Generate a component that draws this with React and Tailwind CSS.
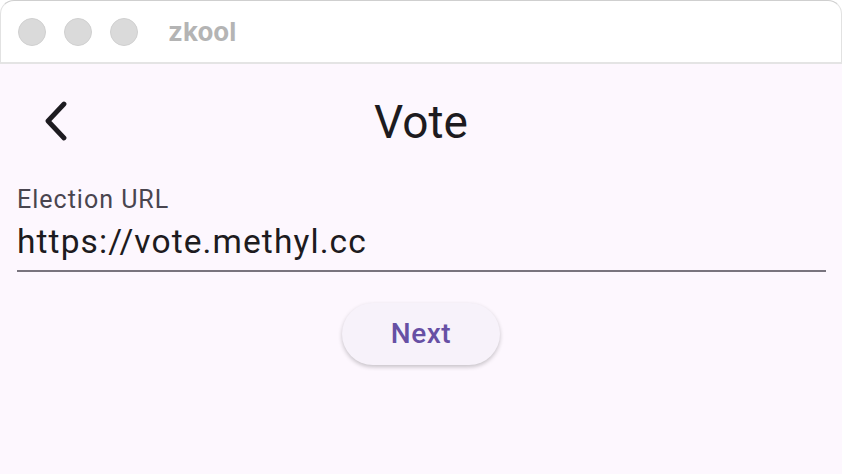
import React, { useState } from "react";

const BackIcon = () => (
    <svg width="26" height="40" viewBox="0 0 26 40" fill="none">
        <path d="M21 3 L5 20 L21 37" stroke="#1d1b20" strokeWidth="4.8" strokeLinecap="round" strokeLinejoin="round" />
    </svg>
);

const App = () => {
    const [url, setUrl] = useState("https://vote.methyl.cc");

    return (
        <div className="w-[842px] h-[474px] bg-white overflow-hidden flex flex-col">
            {/* title bar */}
            <div className="h-[64px] shrink-0 bg-white flex items-center pl-[17px] rounded-t-[14px] border-t border-x border-b-2 border-t-[#cfcfcf] border-x-[#e2e2e2] border-b-[#e4e4e4]">
                <div className="flex gap-[18px]">
                    <div className="w-[28px] h-[28px] rounded-full bg-[#dadada] border border-[#d0d0d0]" />
                    <div className="w-[28px] h-[28px] rounded-full bg-[#dadada] border border-[#d0d0d0]" />
                    <div className="w-[28px] h-[28px] rounded-full bg-[#dadada] border border-[#d0d0d0]" />
                </div>
                <span
                    className="ml-[30px] text-[26px] leading-none font-bold text-[#b4b4b4]"
                    style={{ fontFamily: 'Inter, "Liberation Sans", sans-serif' }}
                >
                    zkool
                </span>
            </div>

            {/* content */}
            <div className="flex-1 bg-[#fdf7fe]" style={{ fontFamily: 'Roboto, "Noto Sans", sans-serif' }}>
                <div className="h-[112px] flex items-center relative">
                    <button className="w-[96px] h-[96px] ml-[8px] mt-[2px] flex items-center justify-center">
                        <BackIcon />
                    </button>
                    <div className="absolute inset-0 pt-[5px] flex items-center justify-center pointer-events-none">
                        <span className="text-[46px] text-[#1d1b20]">Vote</span>
                    </div>
                </div>

                <div className="pl-[17px] pr-[16px] pt-[10px]">
                    <div className="border-b-2 border-[#79747e] pb-[8px]">
                        <div className="text-[25px] leading-[28px] tracking-[1px] text-[#49454f]">Election URL</div>
                        <input
                            className="mt-[8px] w-full bg-transparent outline-none text-[33.5px] leading-[40px] tracking-[1.1px] text-[#1d1b20]"
                            value={url}
                            onChange={(e) => setUrl(e.target.value)}
                        />
                    </div>
                </div>

                <div className="flex justify-center mt-[31px]">
                    <button className="w-[158px] h-[62px] rounded-full bg-[#f7f2fa] shadow-[0_2px_4px_rgba(0,0,0,0.22)] text-[28px] font-medium tracking-[0.5px] text-[#6750a4]">
                        Next
                    </button>
                </div>
            </div>
        </div>
    );
};

export default App;
